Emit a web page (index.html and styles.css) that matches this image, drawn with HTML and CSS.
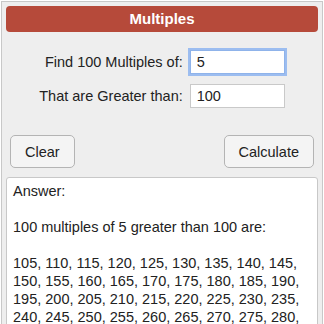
FILE: index.html
```html
<!DOCTYPE html>
<html lang="en">
<head>
	<meta charset="UTF-8">
	<title>Multiples</title>
	<link rel="stylesheet" href="styles.css">
</head>
<body>
	<div class="calc">
		<div class="calc-title">Multiples</div>
		<div class="calc-form">
			<label for="num">Find 100 Multiples of:</label>
			<input id="num" class="focused" type="text" value="5">
			<label for="min">That are Greater than:</label>
			<input id="min" type="text" value="100">
		</div>
		<div class="calc-buttons">
			<button type="button">Clear</button>
			<button type="button">Calculate</button>
		</div>
		<div class="answer">
			<p>Answer:</p>
			<p>100 multiples of 5 greater than 100 are:</p>
			<p>105, 110, 115, 120, 125, 130, 135, 140, 145,<br>
			150, 155, 160, 165, 170, 175, 180, 185, 190,<br>
			195, 200, 205, 210, 215, 220, 225, 230, 235,<br>
			240, 245, 250, 255, 260, 265, 270, 275, 280,</p>
		</div>
	</div>
</body>
</html>
```
FILE: styles.css
```css
body{
	margin:1px;
	font-family:"Liberation Sans", Arial, sans-serif;
	font-size:14px;
	color:#222;
	background:#fff;
	overflow:hidden;
}
.calc{
	border:1px solid #c8c8c8;
	background:#eeeeee;
	padding:4px;
	height:400px;
}
.calc-title{
	background:#b64a3a;
	color:#fff;
	font-weight:bold;
	font-size:15px;
	text-align:center;
	height:26px;
	line-height:26px;
	border-radius:4px;
}
.calc-form{
	display:grid;
	grid-template-columns:auto auto;
	justify-content:center;
	align-items:center;
	column-gap:7px;
	row-gap:10px;
	margin-top:18px;
}
.calc-form label{
	text-align:right;
	font-size:14.5px;
}
.calc-form input{
	width:95px;
	height:24px;
	box-sizing:border-box;
	border:1px solid #c9c9c9;
	padding:0 6px;
	font-family:inherit;
	font-size:14.5px;
	color:#222;
	background:#fff;
	margin:0;
}
.calc-form input.focused{
	border-color:#8fb3ea;
	box-shadow:0 0 0 2px #9cbdf0;
	outline:none;
}
.calc-buttons{
	display:flex;
	justify-content:space-between;
	margin:27px 4px 0 4px;
}
.calc-buttons button{
	height:33px;
	padding:0 14px;
	border:1px solid #b4b4b4;
	border-radius:5px;
	background:#f4f4f4;
	font-family:inherit;
	font-size:14.5px;
	color:#222;
}
.answer{
	margin-top:9px;
	background:#fff;
	border:1px solid #c8c8c8;
	border-radius:3px;
	padding:4px 6px;
	font-size:14.5px;
	line-height:18px;
}
.answer p{
	margin:0 0 18px 0;
}
```
